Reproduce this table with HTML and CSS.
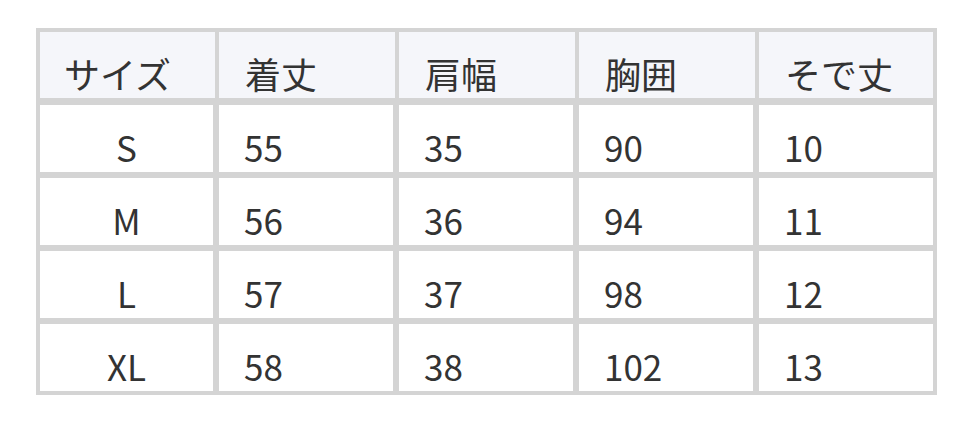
FILE: index.html
```html
<!DOCTYPE html>
<html lang="ja">
<head>
<meta charset="utf-8">
<title>サイズ表</title>
<link rel="stylesheet" href="styles.css">
</head>
<body>
<table class="size-table">
  <colgroup>
    <col class="col-a">
    <col class="col-b">
    <col class="col-b">
    <col class="col-b">
    <col>
  </colgroup>
  <thead>
    <tr>
      <th>サイズ</th>
      <th>着丈</th>
      <th>肩幅</th>
      <th>胸囲</th>
      <th>そで丈</th>
    </tr>
  </thead>
  <tbody>
    <tr><td class="size">S</td><td>55</td><td>35</td><td>90</td><td>10</td></tr>
    <tr><td class="size">M</td><td>56</td><td>36</td><td>94</td><td>11</td></tr>
    <tr><td class="size">L</td><td>57</td><td>37</td><td>98</td><td>12</td></tr>
    <tr><td class="size">XL</td><td>58</td><td>38</td><td>102</td><td>13</td></tr>
  </tbody>
</table>
</body>
</html>
```

FILE: styles.css
```css
html, body {
  margin: 0;
  padding: 0;
  background: #ffffff;
}

body {
  font-family: "Noto Sans CJK JP", "Noto Sans", sans-serif;
  color: #333333;
}

.size-table {
  margin: 28px 0 0 36px;
  width: 901px;
  table-layout: fixed;
  border-collapse: separate;
  border-spacing: 4px;
  background: #d4d4d4;
}

.col-a {
  width: 175px;
}

.col-b {
  width: 176px;
}

.size-table th,
.size-table td {
  font-size: 35px;
  line-height: 40px;
  font-weight: 400;
  text-align: left;
  padding: 22px 24px 5px 25px;
  white-space: nowrap;
}

.size-table th {
  font-size: 36px;
  background: #f5f6fa;
  padding-top: 21px;
  padding-left: 26px;
  border-bottom: 3px solid #d4d4d4;
}

.size-table th:first-child {
  padding-left: 24px;
}

.size-table td {
  background: #ffffff;
  border-right: 2px solid #d4d4d4;
  border-bottom: 2px solid #d4d4d4;
}

.size-table td:last-child {
  border-right: none;
}

.size-table tbody tr:last-child td {
  border-bottom: none;
}

.size-table td.size {
  text-align: center;
  padding-left: 24px;
  padding-right: 24px;
}
```
